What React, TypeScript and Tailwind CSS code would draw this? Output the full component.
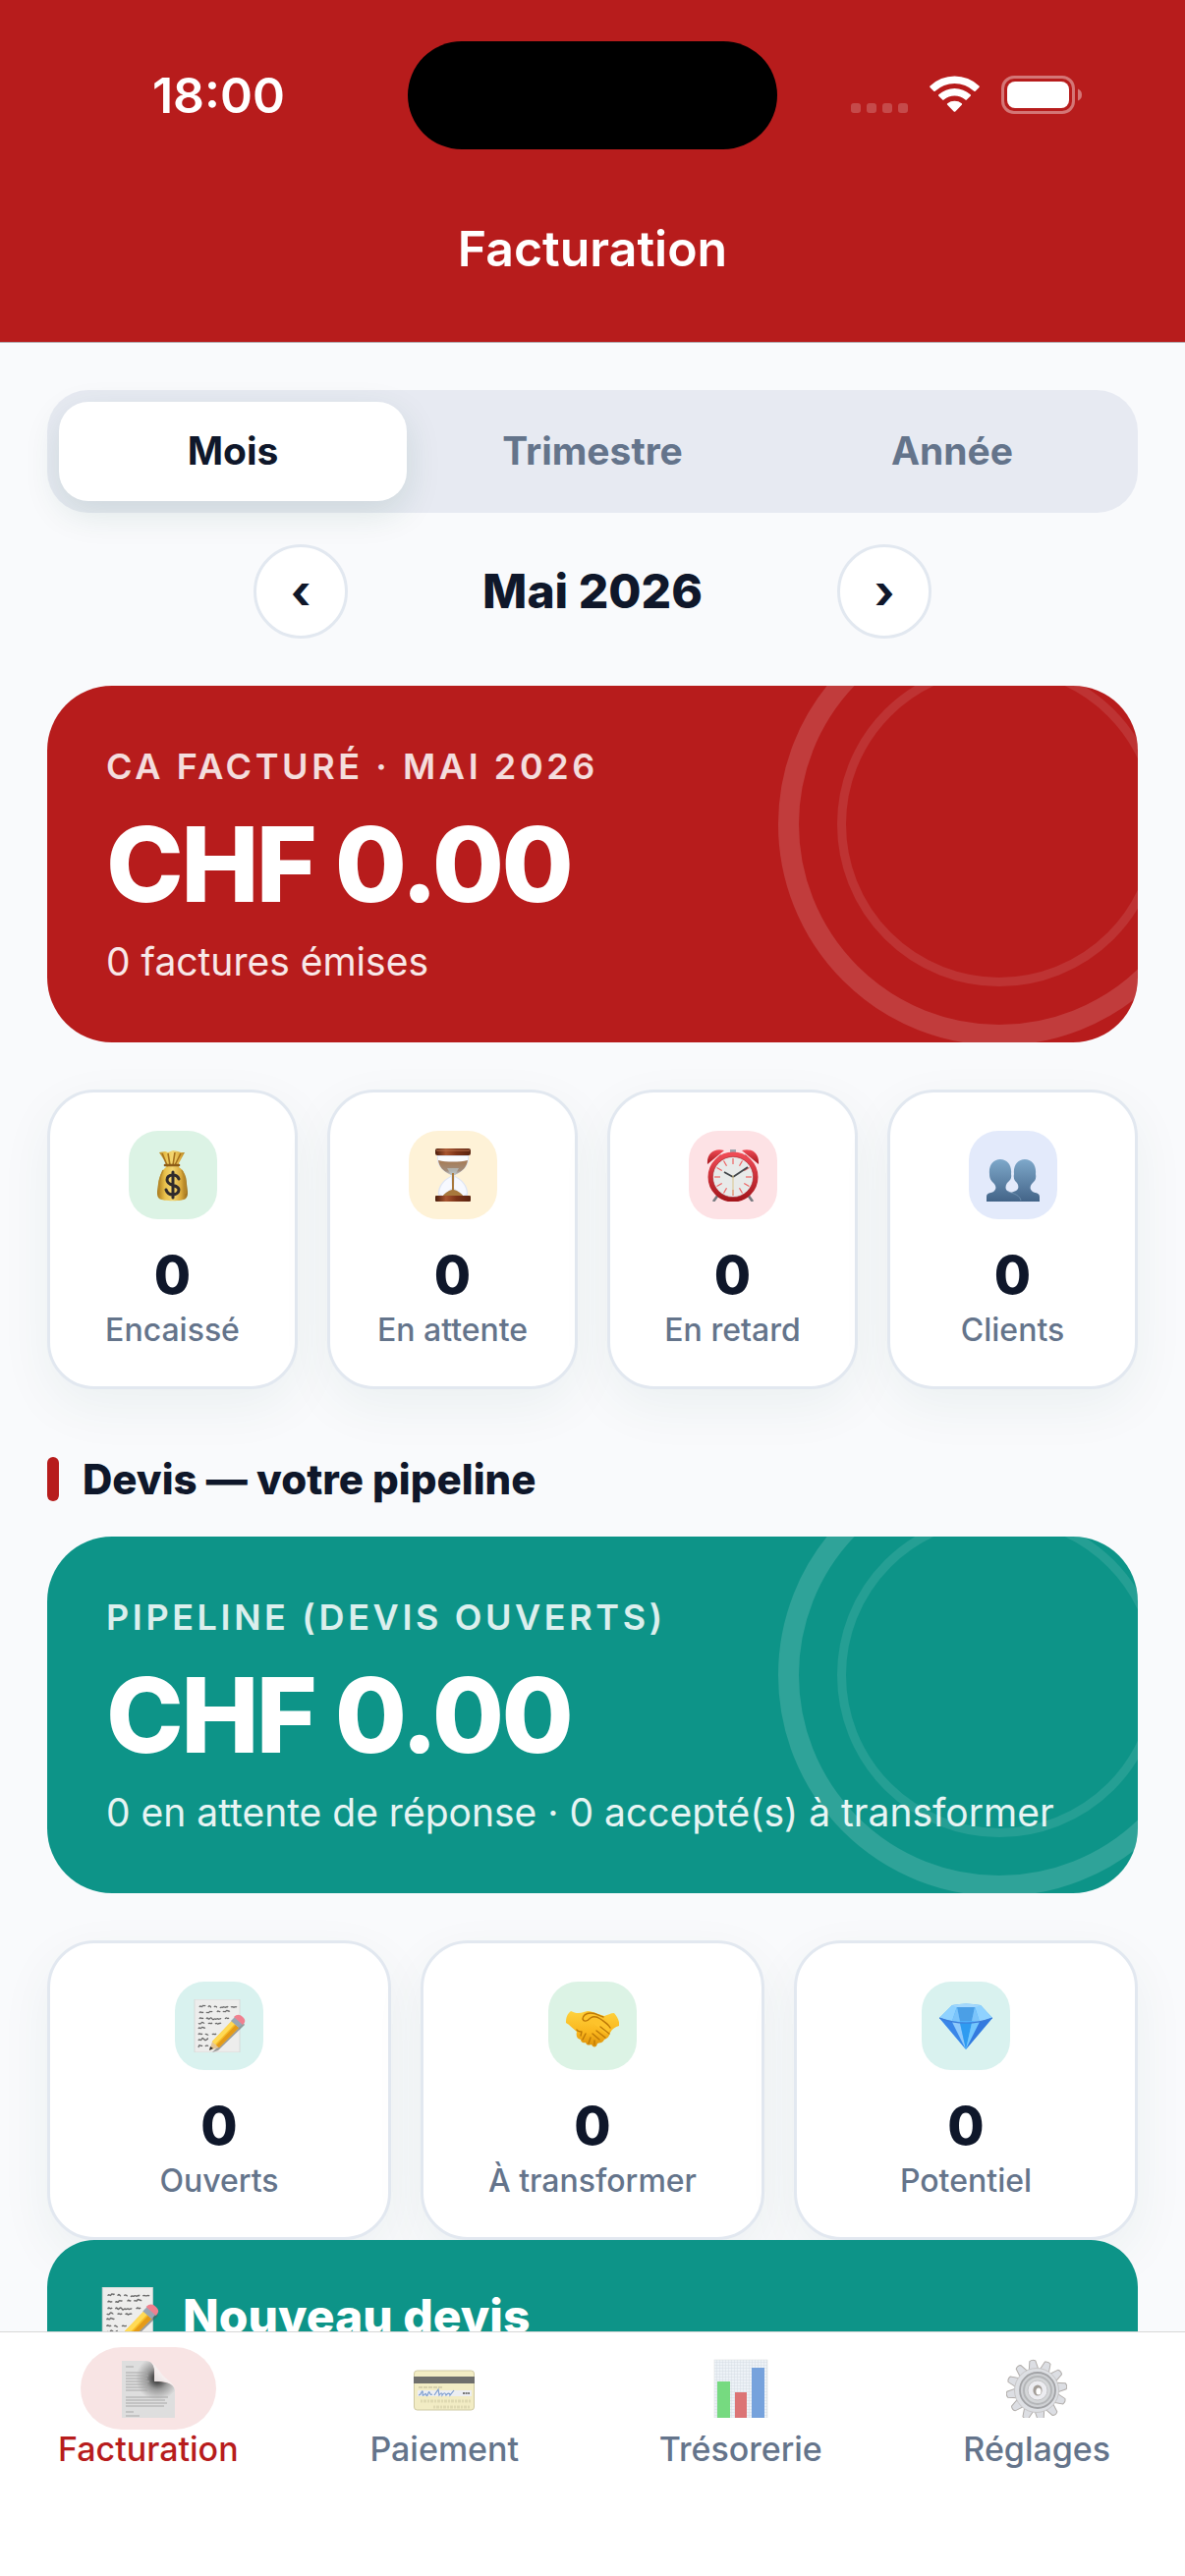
import { FC, ReactNode, useState } from "react";
import clsx from "clsx";

const MoneyBagIcon: FC = () => (
  <svg viewBox="0 0 54 54" className="size-[54px]" aria-hidden="true">
    <defs>
      <linearGradient id="bag" x1="0" x2="1" y1="0" y2="0">
        <stop offset="0" stopColor="#a8781b" />
        <stop offset="0.25" stopColor="#e9c04a" />
        <stop offset="0.5" stopColor="#f3d671" />
        <stop offset="0.78" stopColor="#d9a93a" />
        <stop offset="1" stopColor="#94661a" />
      </linearGradient>
    </defs>
    <path
      d="M13 4l6-1 3 1 5-2 5 1 3 1 4 0-6 11v4c5 3 8 9 8 17 1 8 2 12-1 15-3 3-23 3-27 0-3-3-2-8-1-15 1-8 4-14 8-17v-4z"
      fill="url(#bag)"
    />
    <path d="M16 5l5 12 1 1M22 5l2 12M29 4l-2 13M35 5l-6 12" stroke="#a4701c" strokeWidth="1.6" fill="none" />
    <path d="M19 17h14" stroke="#8d5d18" strokeWidth="2.6" strokeLinecap="round" />
    <path d="M17 22c-3 6-5 12-4 24M36 22c3 6 4 12 4 24" stroke="#b98a2a" strokeWidth="1.4" fill="none" />
    <path
      d="M33 31c-1-3-3-4-6-4-4 0-6 2-6 5 0 7 12 4 12 10 0 3-3 5-6 5-4 0-6-2-7-5M27 24v26"
      stroke="#2f2a2c"
      strokeWidth="3"
      strokeLinecap="round"
      fill="none"
    />
  </svg>
);

const HourglassIcon: FC = () => (
  <svg viewBox="0 0 54 54" className="size-[54px]" aria-hidden="true">
    <defs>
      <linearGradient id="wood" x1="0" x2="1" y1="0" y2="0">
        <stop offset="0" stopColor="#4a1d0d" />
        <stop offset="0.3" stopColor="#a8552f" />
        <stop offset="0.6" stopColor="#7c3318" />
        <stop offset="1" stopColor="#5a2410" />
      </linearGradient>
      <linearGradient id="sand" x1="0" x2="0" y1="0" y2="1">
        <stop offset="0" stopColor="#a87a52" />
        <stop offset="0.7" stopColor="#a18c7c" />
        <stop offset="1" stopColor="#c6ccd0" />
      </linearGradient>
    </defs>
    <path d="M11 7h32c1 10-4 15-14 20v1c10 5 14 12 13 20H12c-1-8 3-15 13-20v-1C15 22 10 17 11 7z" fill="#dfe6f4" />
    <path d="M12 8h30v4c-8 2-22 2-30 0z" fill="#fafcff" />
    <path d="M12 12c8 2 22 2 30 0-1 7-5 11-13 15h-4C17 23 13 19 12 12z" fill="url(#sand)" />
    <path d="M21 20h12l-4 7h-4z" fill="#b8c3c6" opacity="0.7" />
    <path d="M25 29c-7 4-11 8-12 17l4 2 9-8zM29 29c7 4 11 8 12 17l-4 2-9-8z" fill="#f7f9ff" />
    <path d="M26 25h2v17c4 1 8 4 10 7H16c2-3 6-6 10-7z" fill="#a8783c" />
    <rect x="9" y="0" width="36" height="7" rx="2" fill="url(#wood)" />
    <path d="M10 2h34" stroke="#b5704d" strokeWidth="1" />
    <rect x="9" y="48" width="36" height="6" rx="1" fill="url(#wood)" />
  </svg>
);

const AlarmIcon: FC = () => (
  <svg viewBox="0 0 54 54" className="size-[54px]" aria-hidden="true">
    <defs>
      <linearGradient id="alarm" x1="0" x2="0" y1="0" y2="1">
        <stop offset="0" stopColor="#ef4b55" />
        <stop offset="1" stopColor="#a5161c" />
      </linearGradient>
    </defs>
    <path d="M12 47l-5 7M42 47l5 7" stroke="#777b80" strokeWidth="2.6" />
    <path d="M24 1h6v5h-6z" fill="#9da5ae" />
    <path d="M1 16C0 5 8-1 18 2zM53 16C54 5 46-1 36 2z" fill="url(#alarm)" />
    <path d="M11 11l4-4M43 11l-4-4" stroke="#663239" strokeWidth="2" />
    <circle cx="27" cy="29" r="23" fill="#e8eae9" stroke="url(#alarm)" strokeWidth="5" />
    <circle cx="27" cy="29" r="20.6" fill="none" stroke="#a32a2f" strokeWidth="0.6" />
    {[0, 30, 60, 90, 120, 150, 180, 210, 240, 270, 300, 330].map((angle) => (
      <path
        key={angle}
        d="M27 10v6"
        stroke="#ee6060"
        strokeWidth="1.2"
        transform={`rotate(${angle} 27 29)`}
      />
    ))}
    <path d="M27 29l15-10M27 29l-9-5" stroke="#414549" strokeWidth="1.8" />
    <path d="M27 27v20" stroke="#d9c58b" strokeWidth="1" />
  </svg>
);

const ClientsIcon: FC = () => (
  <svg viewBox="0 0 54 54" className="size-[54px]" aria-hidden="true">
    <defs>
      <linearGradient id="busts" x1="0" x2="0" y1="0" y2="1">
        <stop offset="0" stopColor="#7ea8ca" />
        <stop offset="1" stopColor="#436488" />
      </linearGradient>
    </defs>
    <path
      d="M14 11c7 0 12 6 11 15 1 5-2 7-4 9-2 3-2 6 0 8l4 2 5-2c3-2 3-5 1-8-2-2-4-4-3-9-1-9 4-15 11-15s12 6 11 15c1 5-1 7-3 9-3 3-3 6-1 8 2 3 8 1 8 6v5H0v-5c0-5 6-3 8-6 2-2 2-5-1-8-2-2-4-4-4-9-1-9 4-15 11-15z"
      fill="url(#busts)"
    />
    <path d="M22 44c7 2 12 4 13 9" stroke="#7395b4" strokeWidth="0.8" fill="none" />
  </svg>
);

const MemoIcon: FC<{ className?: string }> = ({ className = "size-[54px]" }) => (
  <svg viewBox="0 0 54 54" className={className} aria-hidden="true">
    <rect x="2" y="0" width="46" height="54" fill="#ededec" stroke="#d5d5d5" strokeWidth="0.8" />
    <path
      d="M7 8c1-3 2 1 3-1s2 1 3-1m3 2c1-3 2 0 3 0m3 0c1-2 2 0 3 0m3 1c1-2 2 0 3-1s2 1 3 0 1 1 2-1m3 1c1-1 2 0 3 0s2-1 3 0M7 14c1-3 2 1 4-1m3 1c1-2 2 1 3-1s2 1 3-1m5 1c1-3 2 1 3-1m3 1c1-2 2 1 3-1s2 1 4 0M7 20c1-3 2 1 4-1m3 1c1-3 2 1 3 0s2-2 3 0 2-1 3 0 2-1 3 0 2-1 3 0m4 0c2-3 2 1 4-1M6 25c1-1 2 1 3-1s2 1 3 0m4 1c1-2 2 1 4-1m3 1c2-2 2 1 3 0s2 0 3-1M6 30c1-3 2 1 3-1s2 1 4 0M6 36c1-3 2 1 4-1m3 1c1-2 2 1 3 0m4 0c1-2 2 1 4-1M6 42c1-3 2 1 3-1s1-2 3 0 2-1 4-1M6 49c1-5 2 0 4-2m3 1c1-2 2 0 3-1"
      stroke="#6a6a6a"
      strokeWidth="1.3"
      fill="none"
    />
    <path d="M20 54l31-31 2 3-27 26z" fill="#555" opacity="0.55" />
    <path d="M17 52l3-9 7 6z" fill="#e4c593" />
    <path d="M17 52l1-4 3 2z" fill="#302c2c" />
    <path d="M20 43l20-21 7 7-20 20z" fill="#f8bd25" />
    <path d="M20 43l20-21 3 3-20 21z" fill="#ffda55" />
    <path d="M24 47l20-21 3 3-20 20z" fill="#e49a18" />
    <path d="M39 22l4-4 8 7-4 4z" fill="#98a6b4" />
    <path d="M42 18c3-3 6-3 9 0s3 5 0 8z" fill="#f0808f" />
  </svg>
);

const HandshakeIcon: FC = () => (
  <svg viewBox="0 0 54 54" className="size-[54px]" aria-hidden="true">
    <defs>
      <linearGradient id="hand" x1="0" x2="0" y1="0" y2="1">
        <stop offset="0" stopColor="#ffd23d" />
        <stop offset="0.6" stopColor="#f9b51c" />
        <stop offset="1" stopColor="#dc9009" />
      </linearGradient>
    </defs>
    <path
      d="M5 12c4 2 8 3 13 1 4-2 8 0 12 1l9 3c4-1 6-3 10-3 3 3 6 9 5 13-4 1-7 3-9 7-1 4-3 6-6 7-2 4-5 3-7 4-1 5-5 4-6 1-3 1-5 1-6-2-3 1-5-1-5-3-4-1-5-4-4-8C7 30 4 26 0 24c0-5 1-9 5-12z"
      fill="url(#hand)"
    />
    <path d="M18 14c6-4 12 0 15 2 4 2 11 5 12 10 1 4-1 8-4 9L26 23c-4 0-8 1-10-2 1-3 3-5 2-7z" fill="#fdc32b" />
    <path
      d="M38 18c-4-1-7-4-13-4-5 0-8 3-8 6 1 3 4 3 8-1 3-2 7-1 10 1 4 3 8 5 10 9M35 28l9 7M31 32l9 7M27 35l7 6M11 31c1 2 3 2 5 2l-1 4M20 35l-3 6M25 39l-2 6M29 42v4"
      stroke="#bd7907"
      strokeWidth="1.4"
      strokeLinecap="round"
      strokeLinejoin="round"
      fill="none"
    />
  </svg>
);

const DiamondIcon: FC = () => (
  <svg viewBox="0 0 54 54" className="size-[54px]" aria-hidden="true">
    <path d="M13 6Q27 3 42 6l12 13-27 32L0 19z" fill="#51b2fb" />
    <path d="M13 6L0 19l13 3 5-15zM42 6l12 13-13 4-5-16z" fill="#8fd2ff" />
    <path d="M13 6Q27 3 42 6l-6 2H18z" fill="#a4d8fd" />
    <path d="M18 8h18l-3 14H21z" fill="#4b9fe6" />
    <path d="M18 8l-5 14 8 1zM36 8l5 15-8-1z" fill="#7cc4fa" />
    <path d="M0 19l13 4 14 28z" fill="#3a86e8" />
    <path d="M13 23l8 1 6 27z" fill="#8fc9fb" />
    <path d="M21 24h12l-6 27z" fill="#2e9bf0" />
    <path d="M33 24l8-1-14 28z" fill="#73c7fd" />
    <path d="M41 23l13-4-27 32z" fill="#347ade" />
    <path d="M0 19q27 10 54 0" stroke="#3d7cd8" strokeWidth="1.2" fill="none" />
  </svg>
);

// Tab glyphs share a 62x60 box, the lower edge cuts the drawing
const InvoiceTabIcon: FC = () => (
  <svg viewBox="0 0 62 60" className="h-[60px] w-[62px]" aria-hidden="true">
    <defs>
      <radialGradient id="sheet" cx="40" cy="20" r="22" gradientUnits="userSpaceOnUse">
        <stop offset="0.2" stopColor="#4e4e4e" />
        <stop offset="0.5" stopColor="#9a9a9a" />
        <stop offset="1" stopColor="#dedede" />
      </radialGradient>
      <linearGradient id="fold" x1="0" x2="1" y1="1" y2="0">
        <stop offset="0" stopColor="#cfcaca" />
        <stop offset="0.5" stopColor="#f6efef" />
        <stop offset="1" stopColor="#f8e4e4" />
      </linearGradient>
    </defs>
    <path d="M4 2h24c6 0 9 4 9 10v11c10 0 20 1 21 9v28H4z" fill="url(#sheet)" />
    <path d="M31 2c7 2 7 11 6 21 10-1 19 1 21 8-2-7-7-9-12-14C41 11 37 4 31 2z" fill="url(#fold)" />
    <path
      d="M8 8h8M8 14h22M8 17h23M8 20h22M8 23h24M8 26h22M8 29h24M8 32h22M8 39h43M8 42h40M8 45h42M8 48h39M8 54h8M8 58h14"
      stroke="#a8a8a8"
      strokeWidth="1"
    />
  </svg>
);

const CardTabIcon: FC = () => (
  <svg viewBox="0 0 62 60" className="h-[60px] w-[62px]" aria-hidden="true">
    <rect x="0.5" y="12" width="61" height="40" rx="3" fill="#f2ecc4" stroke="#cfc9a2" />
    <rect x="0" y="18" width="62" height="7" fill="#6f6f6c" />
    <rect x="4" y="32" width="55" height="6" fill="#eceef2" />
    <path d="M5 29h25" stroke="#bdb795" strokeWidth="1" strokeDasharray="4 1" />
    <path
      d="M5 37c3 0 3-5 4-4s-1 5 1 4 2-3 3 0 2-5 3-3 1 3 3 2m2 1l4-6 1 6c2-3 3-3 3 0 2-3 3-3 4 0 2-3 4-2 4 0l4-5"
      stroke="#7f9fd0"
      strokeWidth="1.2"
      fill="none"
    />
    <path d="M50 35h7" stroke="#777" strokeWidth="2" strokeDasharray="2 0.6" />
    <path d="M7 43h51M20 49h38" stroke="#dfd9b2" strokeWidth="3" strokeDasharray="2 1 3 1" />
  </svg>
);

const ChartTabIcon: FC = () => (
  <svg viewBox="0 0 62 60" className="h-[60px] w-[62px]" aria-hidden="true">
    <defs>
      <pattern id="grid" width="3" height="3" patternUnits="userSpaceOnUse">
        <rect width="3" height="3" fill="#edf2f7" />
        <path d="M0 0h3M0 0v3" stroke="#d5dce3" strokeWidth="0.9" />
      </pattern>
    </defs>
    <rect x="4" y="1" width="54" height="59" fill="url(#grid)" stroke="#dcdfe1" strokeWidth="0.6" />
    <rect x="7" y="23" width="13" height="37" fill="#76da80" />
    <rect x="25" y="34" width="12" height="26" fill="#dc7475" />
    <rect x="42" y="9" width="13" height="51" fill="#76a2dc" />
  </svg>
);

const GearTabIcon: FC = () => (
  <svg viewBox="0 0 62 60" className="h-[60px] w-[62px]" aria-hidden="true">
    {[0, 30, 60, 90, 120, 150, 180, 210, 240, 270, 300, 330].map((angle) => (
      <g key={angle} transform={`rotate(${angle - 8} 31 32)`}>
        <path d="M26 12l2-10q3-2 6 0l2 10z" fill="#dcdee3" stroke="#b1adaa" strokeWidth="1" />
      </g>
    ))}
    <circle cx="31" cy="32" r="22.5" fill="#dddfe3" stroke="#c7c6c7" strokeWidth="1" />
    <circle cx="32" cy="32" r="18" fill="#cfd1d4" stroke="#a2a3a6" strokeWidth="1.8" />
    <circle cx="32" cy="32" r="14" fill="#d4d6d8" stroke="#b4b6b8" strokeWidth="2" />
    <circle cx="32" cy="32" r="10" fill="#ececf0" stroke="#c4c4c6" strokeWidth="1" />
    <ellipse cx="32" cy="32" rx="4.6" ry="5.6" fill="#a39d97" />
    <ellipse cx="33" cy="33" rx="2.6" ry="3.6" fill="#fff" />
  </svg>
);

const StatusIcons: FC = () => (
  <svg viewBox="0 0 236 40" className="h-10 w-[236px]" fill="#fff" aria-hidden="true">
    <g opacity="0.2">
      <rect x="0" y="28" width="10" height="10" rx="3" />
      <rect x="16" y="28" width="10" height="10" rx="3" />
      <rect x="32" y="28" width="10" height="10" rx="3" />
      <rect x="48" y="28" width="10" height="10" rx="3" />
    </g>
    <path d="M80.500 10.500a36 36 0 0 1 50 0q.6.7 0 1.400l-3.800 3.900q-.7.600-1.400 0a29 29 0 0 0-39.600 0q-.7.600-1.400 0l-3.800-3.900q-.6-.7 0-1.400z" />
    <path d="M89.300 19.300a24 24 0 0 1 32.400 0q.7.700 0 1.400l-3.900 3.900q-.7.600-1.400 0a16.500 16.500 0 0 0-21.800 0q-.7.600-1.400 0l-3.900-3.900q-.7-.7 0-1.400z" />
    <path d="M98.200 28.300a12 12 0 0 1 14.600 0q.8.700 0 1.500l-6.500 6.700q-.8.700-1.600 0l-6.500-6.700q-.8-.8 0-1.500z" />
    <rect x="154.500" y="1.500" width="72" height="36" rx="11.500" fill="none" stroke="#fff" strokeOpacity="0.4" strokeWidth="3" />
    <rect x="159" y="6" width="63" height="27" rx="8" />
    <path d="M231 13.500q4 1.500 4 6t-4 6z" opacity="0.4" />
  </svg>
);

const PERIODS = ["Mois", "Trimestre", "Année"];

const MONTHS = [
  "Janvier",
  "Février",
  "Mars",
  "Avril",
  "Mai",
  "Juin",
  "Juillet",
  "Août",
  "Septembre",
  "Octobre",
  "Novembre",
  "Décembre",
];

const INVOICE_STATS = [
  { label: "Encaissé", value: 0, icon: <MoneyBagIcon />, tint: "bg-[#dcf3e5]" },
  { label: "En attente", value: 0, icon: <HourglassIcon />, tint: "bg-[#fef2d7]" },
  { label: "En retard", value: 0, icon: <AlarmIcon />, tint: "bg-[#fde2e5]" },
  { label: "Clients", value: 0, icon: <ClientsIcon />, tint: "bg-[#e3eafb]" },
];

const QUOTE_STATS = [
  { label: "Ouverts", value: 0, icon: <MemoIcon />, tint: "bg-[#d9f2ef]" },
  { label: "À transformer", value: 0, icon: <HandshakeIcon />, tint: "bg-[#dcf3e5]" },
  { label: "Potentiel", value: 0, icon: <DiamondIcon />, tint: "bg-[#d9f2ef]" },
];

const TABS = [
  { label: "Facturation", icon: <InvoiceTabIcon /> },
  { label: "Paiement", icon: <CardTabIcon /> },
  { label: "Trésorerie", icon: <ChartTabIcon /> },
  { label: "Réglages", icon: <GearTabIcon /> },
];

interface HeroCardProps {
  title: string;
  amount: string;
  detail: string;
  className: string;
}

const HeroCard: FC<HeroCardProps> = ({ title, amount, detail, className }) => (
  <section className={clsx("relative overflow-hidden rounded-[66px] p-[60px] text-white", className)}>
    <div className="absolute -top-[84px] -right-[84px] flex size-[450px] items-center justify-center rounded-full border-[21px] border-white/14">
      <div className="size-[330px] shrink-0 rounded-full border-[9px] border-white/10" />
    </div>
    <div className="relative">
      <h2 className="text-[36px] leading-[44px] font-semibold tracking-widest text-white/85 uppercase">{title}</h2>
      <p className="mt-3 text-[106px] leading-[132px] font-extrabold tracking-tight">{amount}</p>
      <p className="mt-[10px] text-[39px] leading-[45px] text-white/90">{detail}</p>
    </div>
  </section>
);

interface StatCardProps {
  label: string;
  value: number;
  icon: ReactNode;
  tint: string;
}

const StatCard: FC<StatCardProps> = ({ label, value, icon, tint }) => (
  <div className="flex flex-1 flex-col items-center rounded-[48px] border-3 border-[#e2e8f0] bg-white pt-[39px] pb-[38px] shadow-[0_18px_54px_rgba(20,80,60,0.06)]">
    <div className={clsx("flex size-[90px] items-center justify-center rounded-[30px]", tint)}>{icon}</div>
    <p className="mt-6 text-[54px] leading-[66px] font-extrabold text-[#0f172a]">{value}</p>
    <p className="mt-[3px] text-[32px] leading-[39px] font-medium text-[#64748b]">{label}</p>
  </div>
);

const App: FC = () => {
  const [period, setPeriod] = useState("Mois");
  const [month, setMonth] = useState(4);
  const [tab, setTab] = useState("Facturation");

  const year = 2026 + Math.floor(month / 12);
  const monthLabel = `${MONTHS[((month % 12) + 12) % 12]} ${year}`;

  return (
    <div className="flex h-screen flex-col overflow-hidden bg-[#f9fafc] font-[Inter,sans-serif] text-[#0f172a]">
      <header className="shrink-0 border-b border-[#b5adb1] bg-[#b71c1c] text-white">
        <div className="grid grid-cols-[1fr_376px_1fr] items-center pt-[42px]">
          <time className="justify-self-center pl-[30px] text-[50px] leading-[60px] font-semibold">18:00</time>
          <div className="h-[110px] rounded-full bg-black" />
          <div className="justify-self-center pr-[30px]">
            <StatusIcons />
          </div>
        </div>
        <h1 className="pt-[71px] pb-[65px] text-center text-[50px] leading-[60px] font-semibold">Facturation</h1>
      </header>

      <main className="min-h-0 flex-1 overflow-y-auto px-12 pt-12 [scrollbar-width:none]">
        <div className="flex gap-3 rounded-[42px] bg-[#e7eaf2] p-3">
          {PERIODS.map((name) => (
            <button
              key={name}
              type="button"
              aria-pressed={period === name}
              onClick={() => setPeriod(name)}
              className={clsx(
                "h-[101px] flex-1 rounded-[30px] text-[39px] font-bold",
                period === name
                  ? "bg-white text-[#0f172a] shadow-[0_12px_36px_rgba(20,80,60,0.12)]"
                  : "text-[#64748b]"
              )}
            >
              {name}
            </button>
          ))}
        </div>

        <div className="mt-8 flex items-center justify-center">
          <button
            type="button"
            aria-label="Mois précédent"
            onClick={() => setMonth(month - 1)}
            className="flex size-24 items-center justify-center rounded-full border-3 border-[#e2e8f0] bg-white text-[48px] leading-[60px] font-bold"
          >
            ‹
          </button>
          <p className="min-w-[498px] text-center text-[48px] leading-[60px] font-extrabold">{monthLabel}</p>
          <button
            type="button"
            aria-label="Mois suivant"
            onClick={() => setMonth(month + 1)}
            className="flex size-24 items-center justify-center rounded-full border-3 border-[#e2e8f0] bg-white text-[48px] leading-[60px] font-bold"
          >
            ›
          </button>
        </div>

        <div className="mt-12">
          <HeroCard
            title={`CA facturé · ${monthLabel}`}
            amount="CHF 0.00"
            detail="0 factures émises"
            className="bg-[#b71c1c]"
          />
        </div>

        <div className="mt-12 flex gap-[30px]">
          {INVOICE_STATS.map((stat) => (
            <StatCard key={stat.label} {...stat} />
          ))}
        </div>

        <div className="mt-[69px] mb-9 flex items-center gap-6">
          <span className="h-[45px] w-3 rounded-md bg-[#b71c1c]" />
          <h2 className="text-[42px] leading-[45px] font-extrabold">Devis — votre pipeline</h2>
        </div>

        <HeroCard
          title="Pipeline (devis ouverts)"
          amount="CHF 0.00"
          detail="0 en attente de réponse · 0 accepté(s) à transformer"
          className="bg-[#0d9488]"
        />

        <div className="mt-12 flex gap-[30px]">
          {QUOTE_STATS.map((stat) => (
            <StatCard key={stat.label} {...stat} />
          ))}
        </div>

        <button
          type="button"
          className="relative mb-12 flex w-full items-center gap-6 rounded-[48px] bg-[#0d9488] px-[54px] py-12 text-[48px] leading-[60px] font-extrabold text-white"
        >
          <MemoIcon className="size-[60px]" />
          Nouveau devis
        </button>
      </main>

      <nav className="flex shrink-0 border-t border-[#d8d8d8] bg-white pt-[15px] pb-[109px]">
        {TABS.map(({ label, icon }) => (
          <button
            key={label}
            type="button"
            aria-current={tab === label ? "page" : undefined}
            onClick={() => setTab(label)}
            className={clsx(
              "flex flex-1 flex-col items-center text-[34px] leading-10 font-medium",
              tab === label ? "text-[#b71c1c]" : "text-[#64748b]"
            )}
          >
            <span
              className={clsx(
                "flex h-[84px] w-[138px] items-center justify-center rounded-full",
                tab === label && "bg-[#f8e4e4]"
              )}
            >
              {icon}
            </span>
            {label}
          </button>
        ))}
      </nav>
    </div>
  );
};

export default App;
